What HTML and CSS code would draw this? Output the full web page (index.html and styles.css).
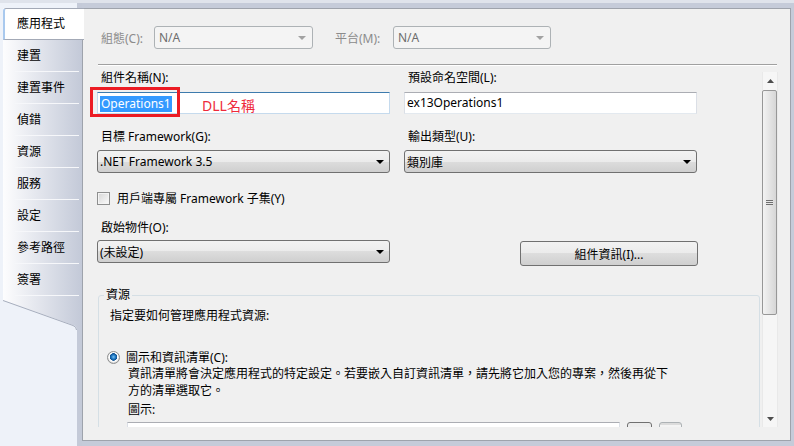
FILE: index.html
```html
<!DOCTYPE html>
<html lang="zh-Hant">
<head>
  <meta charset="UTF-8" />
  <title>專案屬性 – 應用程式</title>
  <link rel="stylesheet" href="styles.css">
</head>
<body>

  <div class="window">
    <nav class="tabs">
      <div class="tab-list">
        <div class="tab active">應用程式</div>
        <div class="tab">建置</div>
        <div class="tab">建置事件</div>
        <div class="tab">偵錯</div>
        <div class="tab">資源</div>
        <div class="tab">服務</div>
        <div class="tab">設定</div>
        <div class="tab">參考路徑</div>
        <div class="tab">簽署</div>
      </div>
      <svg class="tab-tail" width="79" height="34" viewBox="0 0 79 34">
        <defs>
          <linearGradient id="tailGrad">
            <stop offset="0" stop-color="#fdfdfe"/>
            <stop offset="1" stop-color="#c3c9d8"/>
          </linearGradient>
        </defs>
        <path d="M0 0H79V34H74Q74 30 70 29L0 4Z" fill="url(#tailGrad)"/>
        <path d="M0 4.5L70 29.5Q73.5 30.5 73.5 34" fill="none" stroke="#a7aebd"/>
      </svg>
    </nav>

    <div class="panel">
      <div class="config-row">
        <span class="dim-label w53">組態(C):</span>
        <div class="combo disabled w159"><span>N/A</span><i class="arrow"></i></div>
        <span class="dim-label w58 ml22">平台(M):</span>
        <div class="combo disabled w158"><span>N/A</span><i class="arrow"></i></div>
      </div>
      <div class="rule"></div>

      <div class="scroll-area">
        <div class="form">
          <div class="row">
            <div class="field">
              <div class="label">組件名稱(N):</div>
              <div class="textbox focused"><span class="sel">Operations1</span></div>
            </div>
            <div class="field">
              <div class="label">預設命名空間(L):</div>
              <div class="textbox">ex13Operations1</div>
            </div>
          </div>

          <div class="row gap15">
            <div class="field">
              <div class="label">目標 Framework(G):</div>
              <div class="combo mt5"><span>.NET Framework 3.5</span><i class="arrow"></i></div>
            </div>
            <div class="field">
              <div class="label">輸出類型(U):</div>
              <div class="combo mt5"><span>類別庫</span><i class="arrow"></i></div>
            </div>
          </div>

          <div class="check-row">
            <span class="checkbox"></span>
            <span>用戶端專屬 Framework 子集(Y)</span>
          </div>

          <div class="row gap14">
            <div class="field">
              <div class="label">啟始物件(O):</div>
              <div class="combo mt4"><span>(未設定)</span><i class="arrow"></i></div>
            </div>
            <div class="field">
              <div class="button">組件資訊(I)...</div>
            </div>
          </div>

          <fieldset class="group">
            <legend>資源</legend>
            <p class="hint">指定要如何管理應用程式資源:</p>
            <div class="radio-row">
              <span class="radio"></span>
              <span>圖示和資訊清單(C):</span>
            </div>
            <p class="desc">資訊清單將會決定應用程式的特定設定。若要嵌入自訂資訊清單，請先將它加入您的專案，然後再從下方的清單選取它。</p>
            <div class="sub-label">圖示:</div>
            <div class="icon-row">
              <div class="textbox w493"></div>
              <div class="small-btn"></div>
              <div class="small-btn off"></div>
            </div>
          </fieldset>
        </div>

        <div class="scrollbar">
          <div class="sb-arrow"><svg width="7" height="4"><polygon points="0,4 7,4 3.5,0" fill="#4d4d4d"/></svg></div>
          <div class="sb-thumb"><span class="grip"></span></div>
          <div class="sb-track"></div>
          <div class="sb-arrow"><svg width="7" height="4"><polygon points="0,0 7,0 3.5,4" fill="#4d4d4d"/></svg></div>
        </div>
      </div>

      <!-- annotation drawn over the form -->
      <div class="mark-box"></div>
      <div class="mark-text">DLL名稱</div>
    </div>
  </div>

</body>
</html>
```

FILE: styles.css
```css
body {
  margin: 0;
  width: 794px;
  height: 446px;
  overflow: hidden;
  background: #c5cbd9;
  font-family: "Noto Sans", "Noto Sans CJK TC", sans-serif;
  font-size: 12px;
  color: #000;
}
.window {
  height: 446px;
  box-sizing: border-box;
  border-top: 3px solid #dfe3eb;
  padding-top: 5px;
  display: flex;
}

/* left tabs */
.tabs {
  width: 82px;
  flex: none;
  padding-left: 3px;
  box-sizing: border-box;
  margin-top: -5px;
  padding-top: 5px;
  background: linear-gradient(to right, #eef2f9 77px, #c4cad8 77px);
  display: flex;
  flex-direction: column;
  position: relative;
  z-index: 1;
}
.tab-list {
  background: linear-gradient(to right, #fdfdfe, #c3c9d8);
}
.tab {
  height: 32px;
  line-height: 31px;
  box-sizing: border-box;
  margin-left: 12px;
  margin-right: 3px;
  padding-left: 2px;
  border-bottom: 1px solid #f6f7fa;
}
.tab.active {
  margin: 0 -2px 0 0;
  padding-left: 12px;
  background: #fff;
  border-left: 2px solid #a9c9ee;
  border-top: 1px solid #a3a9b6;
  border-bottom: 1px solid #a3a9b6;
  border-top-left-radius: 3px;
  line-height: 30px;
}
.tab-tail {
  display: block;
}

/* main panel */
.panel {
  flex: 1;
  margin: 0 3px 5px 0;
  border: 1px solid #9ea3ac;
  background: #f0f0f0;
  position: relative;
}
.config-row {
  display: flex;
  align-items: center;
  padding: 17px 0 0 18px;
}
.dim-label {
  color: #8b8b8b;
}
.w53 { width: 53px; }
.w58 { width: 58px; }
.ml22 { margin-left: 22px; }
.w159 { width: 159px; }
.w158 { width: 158px; }
.rule {
  height: 1px;
  margin: 15px 13px 0 15px;
  background: #a0a0a0;
  box-shadow: 0 1px 0 #fff;
}

.scroll-area {
  display: flex;
  height: 362px;
}
.form {
  flex: 1;
  overflow: hidden;
  padding: 5px 0 0 14px;
}
.row {
  display: grid;
  grid-template-columns: 293px 293px;
  column-gap: 14px;
}
.gap15 { margin-top: 15px; }
.gap14 { margin-top: 14px; }
.label {
  line-height: 16px;
  padding-left: 4px;
}

/* controls */
.textbox {
  height: 22px;
  box-sizing: border-box;
  margin-top: 6px;
  padding: 0 2px;
  line-height: 20px;
  background: #fff;
  border: 1px solid #dbdfe6;
  border-top-color: #abadb3;
  border-bottom-color: #e3e9ef;
}
.textbox.focused {
  border-color: #c5daed;
  border-top-color: #3d7bad;
}
.sel {
  display: inline-block;
  background: #3399ff;
  color: #fff;
  line-height: 16px;
  padding: 0 1px;
  vertical-align: middle;
}
.combo {
  height: 23px;
  box-sizing: border-box;
  border: 1px solid #707070;
  border-radius: 3px;
  background: linear-gradient(#f2f2f2, #ebebeb 50%, #dddddd 50%, #cfcfcf);
  display: flex;
  align-items: center;
  justify-content: space-between;
  padding: 0 5px 0 2px;
}
.mt5 { margin-top: 5px; }
.mt4 { margin-top: 4px; }
.combo .arrow {
  width: 0;
  height: 0;
  border-left: 4px solid transparent;
  border-right: 4px solid transparent;
  border-top: 4px solid #000;
}
.combo.disabled {
  border-color: #adb2b5;
  background: #f4f4f4;
  color: #6d6d6d;
  padding: 0 6px 0 4px;
}
.combo.disabled .arrow {
  border-top-color: #a2a2a2;
}
.button {
  height: 25px;
  width: 178px;
  box-sizing: border-box;
  margin: 21px 0 0 116px;
  border: 1px solid #707070;
  border-radius: 3px;
  background: linear-gradient(#f2f2f2, #ebebeb 50%, #dddddd 50%, #cfcfcf);
  display: flex;
  align-items: center;
  justify-content: center;
}
.check-row {
  margin-top: 17px;
  height: 16px;
  display: flex;
  align-items: center;
  gap: 7px;
}
.checkbox {
  width: 13px;
  height: 13px;
  box-sizing: border-box;
  border: 1px solid #8e8f8f;
  background: linear-gradient(135deg, #d6d6d6, #fbfbfb);
  box-shadow: inset 0 0 0 1px #f4f4f4;
}

/* resources group */
.group {
  margin: 21px 2px 0 1px;
  padding: 0;
  border: 1px solid #d5dfe5;
  border-radius: 3px;
}
.group legend {
  margin-left: 5px;
  padding: 0 2px;
  line-height: 16px;
}
.hint {
  margin: 5px 0 0 11px;
  line-height: 16px;
}
.radio-row {
  margin: 25px 0 0 8px;
  height: 16px;
  display: flex;
  align-items: center;
  gap: 6px;
}
.radio {
  width: 13px;
  height: 13px;
  box-sizing: border-box;
  border-radius: 50%;
  border: 1px solid #8e8f8f;
  background: radial-gradient(circle at 50% 45%, #7cc4f2 0, #2179c4 2px, #0d4f8f 3.5px, #ffffff 4px, #f2f2f2 5px, #d0d0d0 6px);
}
.desc {
  margin: 0 0 0 29px;
  width: 548px;
  line-height: 17px;
}
.sub-label {
  margin: 3px 0 0 29px;
  line-height: 16px;
}
.icon-row {
  margin: 4px 0 0 28px;
  display: flex;
  gap: 7px;
}
.icon-row .textbox {
  margin-top: 0;
}
.w493 { width: 493px; }
.small-btn {
  width: 25px;
  height: 22px;
  box-sizing: border-box;
  border: 1px solid #707070;
  border-radius: 3px;
  background: #ececec;
}
.small-btn.off {
  width: 23px;
  border-color: #adb2b5;
  background: linear-gradient(#dcdcdc 0, #dcdcdc 2px, #f4f4f4 2px);
}

/* scrollbar */
.scrollbar {
  width: 16px;
  margin: 7px 12px 0 0;
  height: 355px;
  display: flex;
  flex-direction: column;
  background: #f6f6f6;
  box-shadow: inset 1px 0 0 #e9e9e9, inset -1px 0 0 #e9e9e9;
}
.sb-arrow {
  height: 17px;
  flex: none;
  display: flex;
  align-items: center;
  justify-content: center;
}
.sb-thumb {
  height: 225px;
  margin: 1px 1px 0 0;
  box-sizing: border-box;
  border: 1px solid #979797;
  border-radius: 2px;
  background: linear-gradient(to right, #f3f3f3, #e6e6e6 45%, #d6d6d6);
  display: flex;
  align-items: center;
  justify-content: center;
}
.grip {
  width: 7px;
  height: 5px;
  background: repeating-linear-gradient(#6f6f6f 0, #6f6f6f 1px, #e6e6e6 1px, #e6e6e6 2px);
}
.sb-track {
  flex: 1;
}

/* red annotation */
.mark-box {
  position: absolute;
  left: 7px;
  top: 78px;
  width: 90px;
  height: 30px;
  box-sizing: border-box;
  border: 3px solid #ec1c24;
}
.mark-text {
  position: absolute;
  left: 119px;
  top: 89px;
  font-size: 14px;
  line-height: 16px;
  color: #ee2a3c;
}
```
